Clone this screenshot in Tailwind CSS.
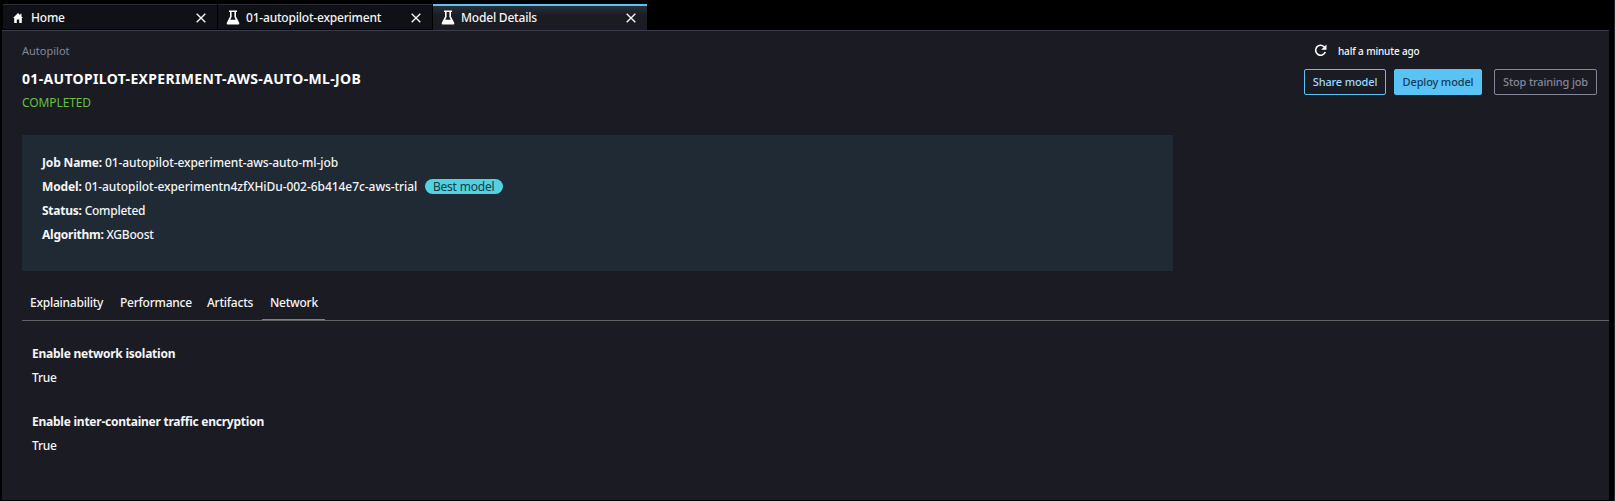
<!DOCTYPE html>
<html lang="en">
<head>
<meta charset="utf-8">
<title>Model Details</title>
<script src="https://cdn.jsdelivr.net/npm/@tailwindcss/browser@4"></script>
</head>
<body class="flex h-[501px] w-[1615px] overflow-hidden bg-black pl-[2px] font-['Noto_Sans',sans-serif] text-[12px] leading-6 text-[#f5f5f5]">
<svg class="hidden">
  <symbol id="flask" viewBox="0 0 14 15"><path d="M3 .5h8V2H10v4.500L13.300 13q.3 1.500-1 1.500H1.700Q.4 14.500.7 13L4 6.500V2H3ZM5.600 2v5L4.300 9.800h5.400L8.400 7V2Z" fill="currentColor" fill-rule="evenodd"/></symbol>
  <symbol id="close" viewBox="0 0 10 10"><path d="m.7.7 8.600 8.600M9.300.7.7 9.300" fill="none" stroke="currentColor" stroke-width="1.400"/></symbol>
</svg>
<div class="flex w-[1607px] flex-col">
  <nav class="flex h-[30px] items-end gap-px pt-1 font-medium tracking-[-0.2px]">
    <div class="mb-px ml-px flex h-[25px] w-[214px] items-center border-t border-[#2b2c38] bg-[#101116] pt-px pr-[11px] pl-[10px]">
      <svg class="h-[10px] w-[10px] text-white" viewBox="0 0 10 10"><path d="M5 0 0 5h1.200v5h2.600V6.500h2.400V10h2.600V5H10L8.500 3.500V.8H7.300v1.500Z" fill="currentColor"/></svg>
      <span class="ml-2 flex-1">Home</span>
      <svg class="h-[10px] w-[10px]"><use href="#close"/></svg>
    </div>
    <div class="mb-px flex h-[25px] w-[214px] items-center border-t border-[#2b2c38] bg-[#101116] pt-px pr-[11px] pl-2">
      <svg class="h-[15px] w-[14px] text-white"><use href="#flask"/></svg>
      <span class="ml-[6px] flex-1">01-autopilot-experiment</span>
      <svg class="h-[10px] w-[10px]"><use href="#close"/></svg>
    </div>
    <div class="flex h-[26px] w-[214px] items-center border-t-2 border-[#5ac3f5] bg-linear-to-b from-[#28303b] to-[#1b1b23] to-40% pr-[11px] pl-2">
      <svg class="mb-px h-[15px] w-[14px] text-white"><use href="#flask"/></svg>
      <span class="ml-[6px] flex-1">Model Details</span>
      <svg class="h-[10px] w-[10px]"><use href="#close"/></svg>
    </div>
  </nav>
  <main class="h-[470px] border-t border-[#3b3c4a] bg-[#1b1b23] pl-5">
    <header class="flex h-[104px] justify-between pr-3">
      <div class="pt-2">
        <p class="text-[11px] text-[#85869a]">Autopilot</p>
        <h1 class="mt-1 text-[14px] leading-6 font-bold tracking-[0.34px] text-white">01-AUTOPILOT-EXPERIMENT-AWS-AUTO-ML-JOB</h1>
        <p class="tracking-[-0.1px] text-[#67c03e]">COMPLETED</p>
      </div>
      <div class="w-[293px] pt-2">
        <div class="flex items-center pl-[10px] text-[10px] font-medium tracking-[-0.15px]">
          <svg class="mb-[2px] h-[13px] w-[13px] text-white" viewBox="0 0 13 13"><path d="M10.600 3.200A5 5 0 1 0 11.300 8" fill="none" stroke="currentColor" stroke-width="1.600"/><path d="M12.500.5v5.300H7.200Z" fill="currentColor"/></svg>
          <span class="ml-[11px]">half a minute ago</span>
        </div>
        <div class="mt-[6px] flex text-[11px] leading-6 font-medium tracking-[-0.15px]">
          <button class="h-[26px] w-[82px] rounded-[2px] border border-[#5ac3f5] text-[#9bdcff]">Share model</button>
          <button class="ml-2 h-[26px] w-[88px] rounded-[2px] border border-[#5ac3f5] bg-[#5ac3f5] text-[#173c55]">Deploy model</button>
          <button class="ml-3 h-[26px] w-[103px] rounded-[2px] border border-[#85869a] text-[#85869a]">Stop training job</button>
        </div>
      </div>
    </header>
    <section class="h-[136px] w-[1151px] bg-[#202a35] px-5 pt-4 font-medium tracking-[-0.15px]">
      <p><b>Job Name:</b> <span class="tracking-[-0.09px]">01-autopilot-experiment-aws-auto-ml-job</span></p>
      <p class="flex items-center"><b>Model:</b> <span class="ml-[3px] w-[332px] whitespace-nowrap tracking-[-0.06px]">01-autopilot-experimentn4zfXHiDu-002-6b414e7c-aws-trial</span><span class="mb-px ml-2 h-[15px] w-[78px] rounded-full bg-[#52d1e0] text-center leading-[15px] font-normal tracking-[-0.2px] text-[#173c45]">Best model</span></p>
      <p class="tracking-[-0.24px]"><b>Status:</b> <span>Completed</span></p>
      <p class="tracking-[-0.24px]"><b>Algorithm:</b> <span>XGBoost</span></p>
    </section>
    <div class="mt-[14px] flex h-[36px] border-b border-[#626262] leading-9 font-medium tracking-[-0.24px]">
      <span class="w-[90px] pl-2">Explainability</span>
      <span class="w-[87px] pl-2">Performance</span>
      <span class="w-[63px] pl-2">Artifacts</span>
      <span class="w-[63px] border-b border-[#24a0d8] pl-2">Network</span>
    </div>
    <section class="pt-[21px] pl-[10px] font-medium tracking-[-0.24px]">
      <p class="font-bold">Enable network isolation</p>
      <p>True</p>
      <p class="mt-5 font-bold">Enable inter-container traffic encryption</p>
      <p>True</p>
    </section>
  </main>
</div>
<div class="ml-[5px] w-px bg-[#24242c]"></div>
</body>
</html>
